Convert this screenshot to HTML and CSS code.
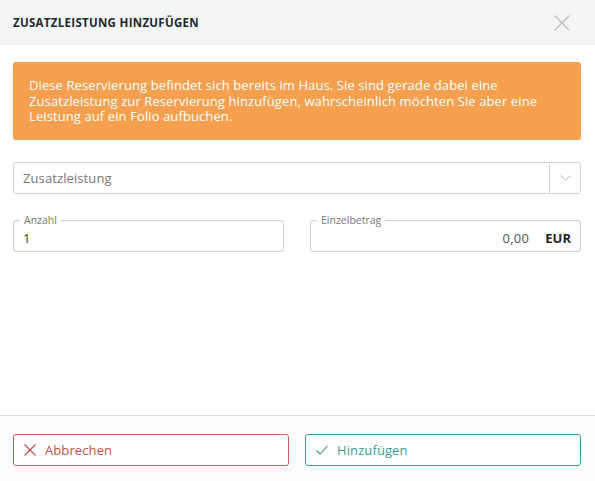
FILE: index.html
```html
<!DOCTYPE html>
<html lang="de">
<head>
<meta charset="utf-8">
<link rel="stylesheet" href="styles.css">
</head>
<body>
<div class="dialog">
  <header class="head">
    <h1 class="title">ZUSATZLEISTUNG HINZUFÜGEN</h1>
    <svg class="close" width="16" height="16" viewBox="0 0 16 16"><path d="M0.5 0.5L15.5 15.5M15.5 0.5L0.5 15.5" stroke="#bcbcbc" stroke-width="1.2" fill="none"/></svg>
  </header>
  <main class="content">
    <div class="alert">Diese Reservierung befindet sich bereits im Haus. Sie sind gerade dabei eine Zusatzleistung zur Reservierung hinzufügen, wahrscheinlich möchten Sie aber eine Leistung auf ein Folio aufbuchen.</div>
    <div class="select">
      <span class="placeholder">Zusatzleistung</span>
      <span class="arrow"><svg width="11" height="6" viewBox="0 0 11 6"><path d="M0.5 0.5L5.5 5.2L10.5 0.5" stroke="#b8b8b8" stroke-width="1" fill="none"/></svg></span>
    </div>
    <div class="row">
      <div class="field">
        <span class="legend">Anzahl</span>
        <span class="value">1</span>
      </div>
      <div class="field field-amount">
        <span class="legend">Einzelbetrag</span>
        <span class="value">0,00</span>
        <span class="cur">EUR</span>
      </div>
    </div>
  </main>
  <footer class="foot">
    <button class="btn btn-cancel"><svg width="12" height="12" viewBox="0 0 12 12"><path d="M0.5 0.5L11.5 11.5M11.5 0.5L0.5 11.5" stroke="currentColor" stroke-width="1.2" fill="none"/></svg>Abbrechen</button>
    <button class="btn btn-add"><svg width="12" height="10" viewBox="0 0 12 10"><path d="M0.5 5.5L4 9L11.5 0.8" stroke="currentColor" stroke-width="1.1" fill="none"/></svg>Hinzufügen</button>
  </footer>
</div>
</body>
</html>
```
FILE: styles.css
```css
* { box-sizing: border-box; }
html, body { margin: 0; padding: 0; }
body {
  font-family: "Open Sans", "Liberation Sans", sans-serif;
  color: #333;
  background: #fff;
}
.dialog {
  display: flex;
  flex-direction: column;
  height: 481px;
}
.head {
  height: 45px;
  background: #f3f5f5;
  display: flex;
  align-items: center;
  justify-content: space-between;
  padding: 0 25px 0 13px;
}
.title {
  margin: 0;
  font-size: 11.5px;
  font-weight: 700;
  letter-spacing: 0.3px;
  color: #1c2a30;
}
.close { display: block; }
.content {
  flex: 1;
  padding: 17px 14px 0 13px;
}
.alert {
  background: #f5a04f;
  color: #fff;
  font-size: 13px;
  letter-spacing: 0.1px;
  line-height: 15.5px;
  padding: 16px 16px 15px 16px;
  border-radius: 3px;
}
.select {
  margin-top: 22px;
  height: 32px;
  border: 1px solid #d2d2d2;
  border-radius: 3px;
  display: flex;
  align-items: stretch;
}
.placeholder {
  flex: 1;
  display: flex;
  align-items: center;
  padding-left: 9px;
  font-size: 13px;
  letter-spacing: 0.1px;
  color: #777;
}
.arrow {
  width: 31px;
  border-left: 1px solid #d2d2d2;
  display: flex;
  align-items: center;
  justify-content: center;
  padding-top: 1px;
}
.row {
  margin-top: 26px;
  display: flex;
  gap: 26px;
}
.field {
  position: relative;
  flex: 1;
  height: 32px;
  border: 1px solid #cfcfcf;
  border-radius: 3px;
  display: flex;
  align-items: center;
  padding: 5px 9px 0 9px;
  font-size: 13px;
  color: #333;
}
.legend {
  position: absolute;
  left: 6px;
  top: -7px;
  padding: 0 4px;
  background: #fff;
  font-size: 10.5px;
  color: #777;
  line-height: 12px;
}
.field-amount { justify-content: flex-end; }
.field-amount .value { color: #555; letter-spacing: 0.3px; }
.cur {
  margin-left: 16px;
  font-weight: 700;
  color: #222;
}
.foot {
  height: 66px;
  border-top: 1px solid #dcdcdc;
  background: #fafbfb;
  display: flex;
  gap: 16px;
  padding: 18px 14px 0 13px;
}
.btn {
  flex: 1;
  height: 32px;
  border-radius: 3px;
  background: #fff;
  font-family: inherit;
  font-size: 13px;
  letter-spacing: 0.1px;
  display: flex;
  align-items: center;
  gap: 9px;
  padding: 0 10px;
  cursor: pointer;
}
.btn-cancel {
  border: 1px solid #cc5e60;
  color: #c4504f;
}
.btn-add {
  border: 1px solid #3e9c96;
  color: #3e9c96;
}
```
